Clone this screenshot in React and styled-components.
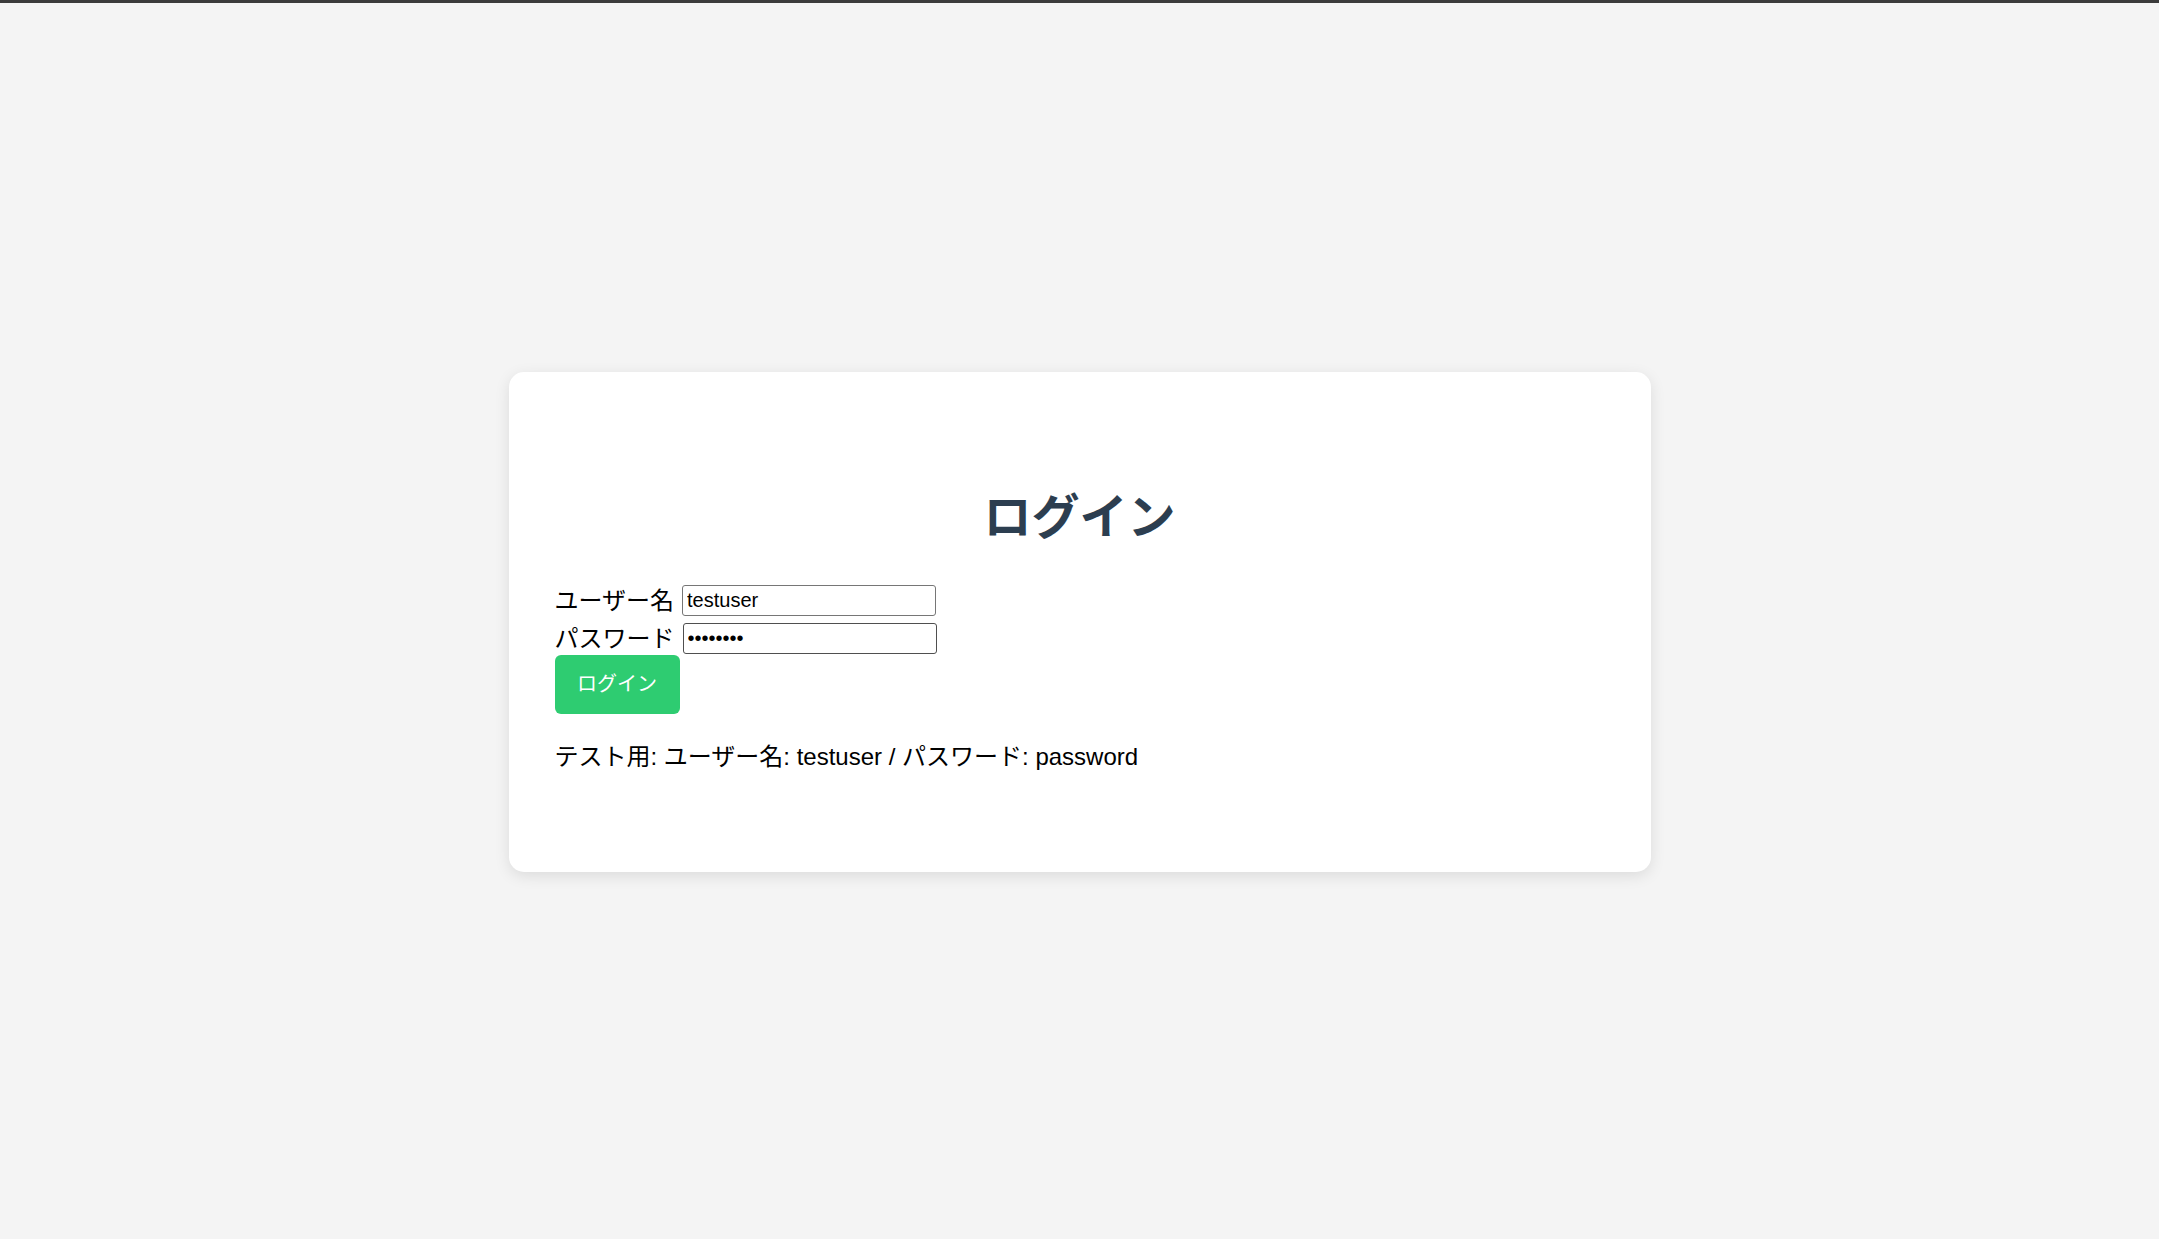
import styled, { createGlobalStyle } from 'styled-components';

const GlobalStyle = createGlobalStyle`
  html, body {
    margin: 0;
    padding: 0;
    background-color: #f4f4f4;
  }

  body {
    font-family: "Liberation Sans", "Noto Sans CJK JP", sans-serif;
    color: #000;
  }
`;

export default function App() {
  return (
    <>
      <GlobalStyle />
      <Page>
        <TopBar />
        <Main>
          <Card>
            <Title>ログイン</Title>
            <Form onSubmit={(e) => e.preventDefault()}>
              <Row>
                <Label htmlFor="username">ユーザー名</Label>
                <Input id="username" type="text" defaultValue="testuser" />
              </Row>
              <Row>
                <Label htmlFor="password">パスワード</Label>
                <Input
                  id="password"
                  type="password"
                  defaultValue="password"
                  $hover
                />
              </Row>
              <SubmitButton type="submit">ログイン</SubmitButton>
            </Form>
            <Hint>テスト用: ユーザー名: testuser / パスワード: password</Hint>
          </Card>
        </Main>
      </Page>
    </>
  );
}

const Page = styled.div`
  display: flex;
  flex-direction: column;
  min-height: 100vh;
`;

const TopBar = styled.div`
  height: 3px;
  background-color: #3b3b3b;
`;

const Main = styled.main`
  flex: 1;
  display: flex;
  align-items: center;
  justify-content: center;
  padding-top: 2px;
`;

const Card = styled.section`
  box-sizing: border-box;
  width: 1142px;
  min-height: 500px;
  padding: 45px 46px;
  border-radius: 15px;
  background-color: #fff;
  box-shadow: 0 4px 15px rgba(0, 0, 0, 0.1);
`;

const Title = styled.h1`
  margin: 72px 0 38px;
  color: #2c3e50;
  font-size: 48px;
  font-weight: 700;
  line-height: 57.6px;
  text-align: center;
`;

const Form = styled.form`
  display: flex;
  flex-direction: column;
  align-items: flex-start;
`;

const Row = styled.div`
  display: flex;
  align-items: center;
  gap: 8px;

  & + & {
    margin-top: 7px;
  }
`;

const Label = styled.label`
  font-size: 24px;
  line-height: 31px;
`;

const Input = styled.input`
  box-sizing: border-box;
  width: 254px;
  height: 31px;
  padding: 0 4px;
  border: 1px solid ${({ $hover }) => ($hover ? '#4f4f4f' : '#767676')};
  border-radius: 3px;
  font-family: "Liberation Sans", "Noto Sans CJK JP", sans-serif;
  font-size: 20px;
  color: #000;
  background-color: #fff;
`;

const SubmitButton = styled.button`
  margin-top: 1px;
  padding: 15px 22.5px;
  border: none;
  border-radius: 6px;
  background-color: #2ecc71;
  color: #fff;
  font-family: "Liberation Sans", "Noto Sans CJK JP", sans-serif;
  font-size: 20px;
  line-height: 29px;
  cursor: pointer;
`;

const Hint = styled.p`
  margin: 25px 0 0;
  font-size: 24px;
  line-height: 36px;
`;
